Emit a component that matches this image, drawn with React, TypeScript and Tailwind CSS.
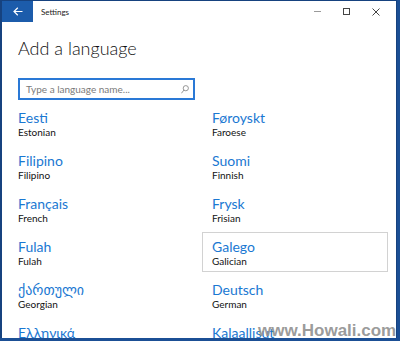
import React from "react";

const langs: [string, string][] = [
  ["Eesti", "Estonian"],
  ["Føroyskt", "Faroese"],
  ["Filipino", "Filipino"],
  ["Suomi", "Finnish"],
  ["Français", "French"],
  ["Frysk", "Frisian"],
  ["Fulah", "Fulah"],
  ["Galego", "Galician"],
  ["ქართული", "Georgian"],
  ["Deutsch", "German"],
  ["Ελληνικά", "Greek"],
  ["Kalaallisut", "Greenlandic"],
];

export default function App() {
  return (
    <div
      className="relative w-[400px] h-[341px] bg-[#1b4f95] overflow-hidden"
      style={{ fontFamily: "Lato, 'Noto Sans', 'DejaVu Sans', sans-serif" }}
    >
      <div className="relative w-[397px] h-[338px] bg-white border-l-2 border-t border-r border-[#16427f] overflow-hidden">
        {/* title bar */}
        <div className="flex h-[21px] items-center">
          <div className="w-[31px] h-full bg-[#1c5cab] flex items-center justify-center">
            <svg width="10" height="9" viewBox="0 0 10 9" fill="none" stroke="white" strokeWidth="1.2">
              <path d="M9.5 4.5H1M4.8 0.8L1 4.5l3.8 3.7" />
            </svg>
          </div>
          <div className="ml-[8px] text-[8px] text-[#222]">Settings</div>
          <div className="flex-1" />
          <div className="w-[29px] flex justify-center">
            <div className="w-[7px] h-px bg-[#9a9a9a]" />
          </div>
          <div className="w-[29px] flex justify-center">
            <div className="w-[7px] h-[7px] border border-[#444]" />
          </div>
          <div className="w-[29px] flex justify-center mr-[6px]">
            <svg width="8" height="8" viewBox="0 0 8 8" stroke="#444" strokeWidth="1">
              <path d="M0.5 0.5l7 7M7.5 0.5l-7 7" />
            </svg>
          </div>
        </div>

        <div className="mt-[14px] ml-[16px] text-[18px] leading-[24px] font-light text-[#111]">
          Add a language
        </div>

        <div className="mt-[18px] ml-[16px] w-[177px] h-[22px] border-2 border-[#2a79d6] flex items-center pl-[6px] pr-[4px]">
          <span className="text-[10px] text-[#7a7a7a] flex-1">Type a language name...</span>
          <svg width="8" height="9" viewBox="0 0 8 9" fill="none" stroke="#8a8a8a" strokeWidth="0.9">
            <circle cx="4.8" cy="3.2" r="2.6" />
            <path d="M3 5l-2.6 3.3" />
          </svg>
        </div>

        <div className="mt-[3px] ml-[6px] w-[380px] grid grid-cols-2 gap-x-[8px] gap-y-[3px]">
          {langs.map(([n, e]) => (
            <div
              key={n}
              className={`h-[40px] border pl-[9px] pt-[5px] ${
                n === "Galego" ? "border-[#d2d2d2]" : "border-transparent"
              }`}
            >
              <div className="text-[14px] leading-[17px] text-[#1a78d2]">{n}</div>
              <div className="text-[10px] leading-[12px] text-[#111]">{e}</div>
            </div>
          ))}
        </div>
      </div>

      <div
        className="absolute left-[258px] top-[322px] text-[17px] leading-[17px] font-bold text-[#8e8e8e]/90"
        style={{ fontFamily: "'Liberation Sans', Arial, sans-serif" }}
      >
        www.Howali.com
      </div>
    </div>
  );
}
